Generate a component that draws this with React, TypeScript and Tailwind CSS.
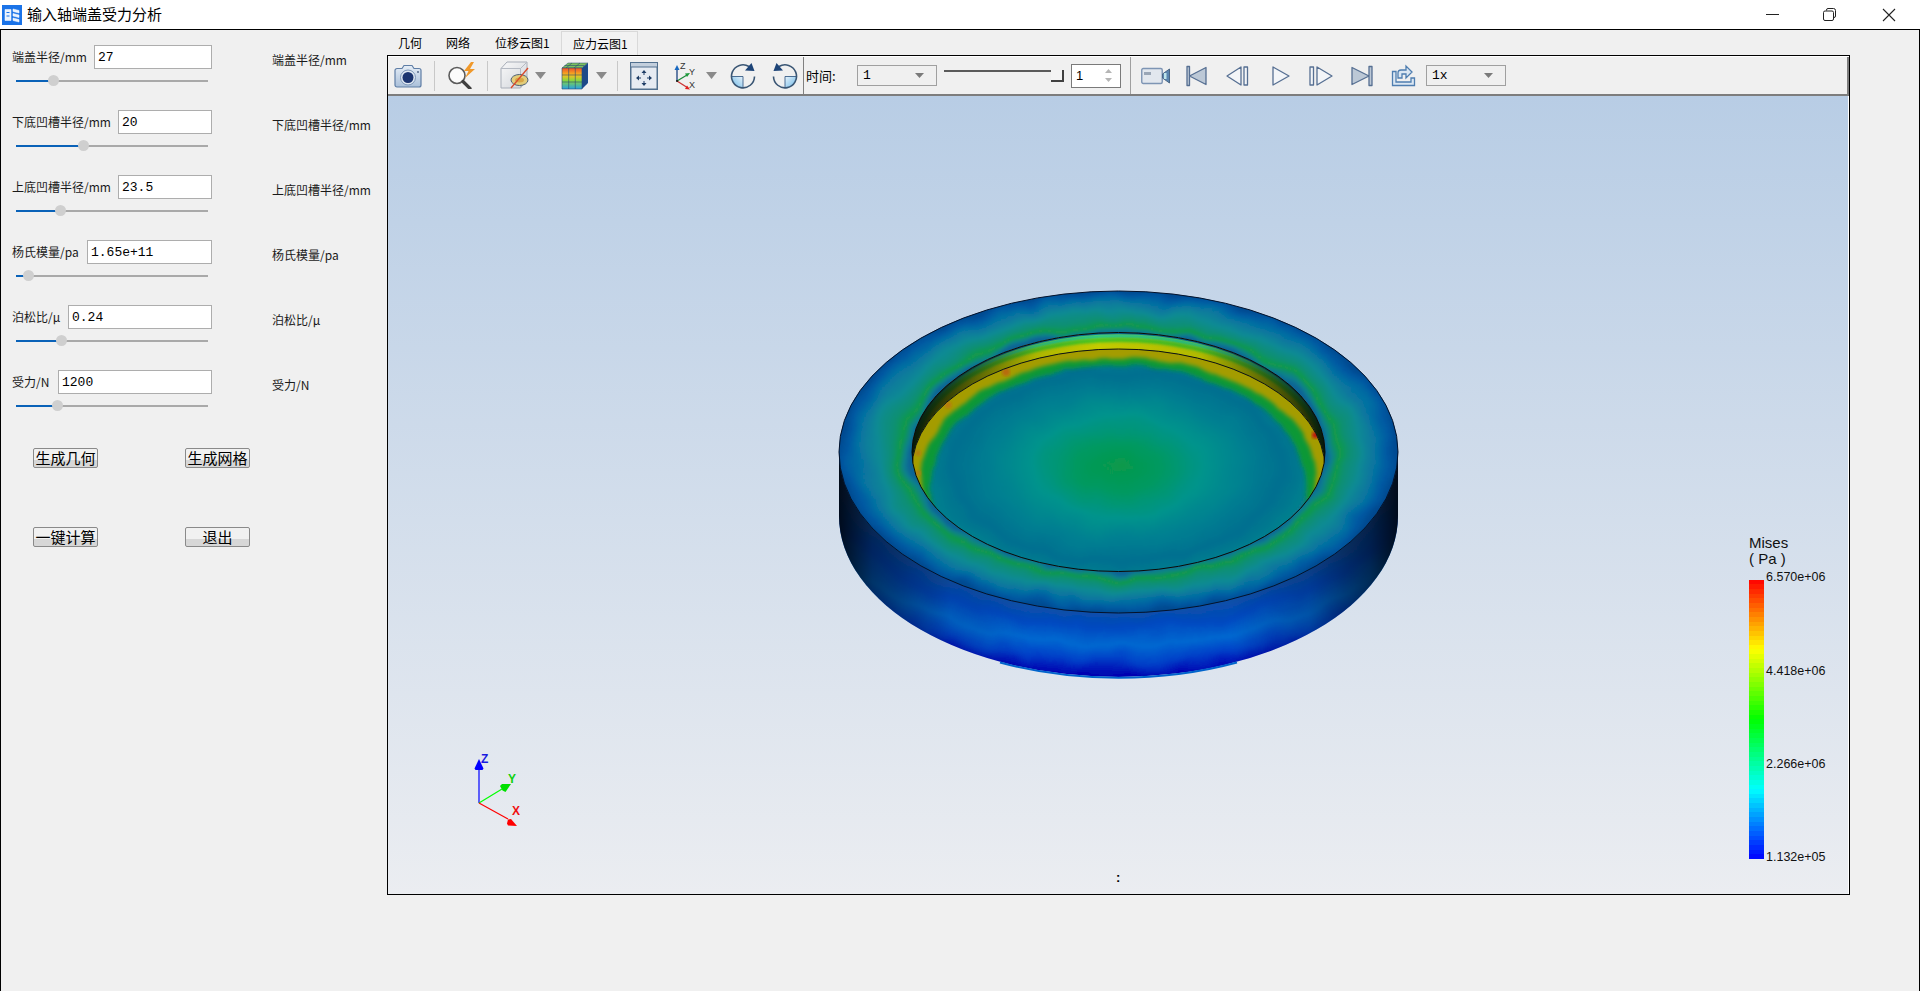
import React from "react";

const CJK = "font-['Noto_Sans_CJK_SC','Noto_Sans',sans-serif]";

const rows = [
  { label: "端盖半径/mm", labelW: "w-[82px]", value: "27", pct: 37 },
  { label: "下底凹槽半径/mm", labelW: "w-[106px]", value: "20", pct: 67 },
  { label: "上底凹槽半径/mm", labelW: "w-[106px]", value: "23.5", pct: 44 },
  { label: "杨氏模量/pa", labelW: "w-[75px]", value: "1.65e+11", pct: 12 },
  { label: "泊松比/μ", labelW: "w-[56px]", value: "0.24", pct: 45 },
  { label: "受力/N", labelW: "w-[46px]", value: "1200", pct: 41 },
];

function bandColor(i: number, n: number) {
  const t = (i + 0.5) / n;
  const seg = t * 4;
  let r = 0, g = 0, b = 0;
  if (seg < 1) { g = seg; b = 1; }
  else if (seg < 2) { g = 1; b = 2 - seg; }
  else if (seg < 3) { r = seg - 2; g = 1; }
  else { r = 1; g = 4 - seg; }
  return `rgb(${Math.round(r * 255)},${Math.round(g * 255)},${Math.round(b * 255)})`;
}

function Slider({ pct }: { pct: number }) {
  return (
    <div className="relative ml-1 mt-[11px] h-[2px] w-[192px] bg-[#a9a9a9]">
      <div className="h-full bg-[#0a62b8]" style={{ width: `${pct / 100 * 192 * 0.52}px` }} />
      <div
        className="absolute top-[-5px] h-[11px] w-[11px] rounded-full bg-[#cfcfcf]"
        style={{ left: `${pct / 100 * 192 * 0.52 - 5}px` }}
      />
    </div>
  );
}

function Row({ label, labelW, value, pct }: (typeof rows)[number]) {
  return (
    <div className="flex h-[65px] items-start">
      <div className="flex w-[200px] flex-col">
        <div className="flex h-6 items-center">
          <span className={`${labelW} ${CJK} text-[12px] text-[#1a1a1a] shrink-0 whitespace-nowrap`}>{label}</span>
          <div className="flex h-6 flex-1 items-center border border-[#adadad] bg-white pl-[3px] pt-px font-['Liberation_Mono',monospace] text-[13px] text-black">
            {value}
          </div>
        </div>
        <Slider pct={pct} />
      </div>
      <span className={`ml-[60px] mt-[6px] ${CJK} text-[12px] text-[#1a1a1a] whitespace-nowrap`}>{label}</span>
    </div>
  );
}

function Btn({ children }: { children: React.ReactNode }) {
  return (
    <div className={`flex h-5 w-[65px] items-center justify-center rounded-[2px] border border-[#8a8a8a] bg-[linear-gradient(#f1f1f1_62%,#d7d7d7_62%)] pb-px ${CJK} text-[15px] leading-none text-black`}>
      {children}
    </div>
  );
}

function Combo({ value, className }: { value: string; className: string }) {
  return (
    <div className={`flex h-[21px] w-20 shrink-0 items-center justify-between border border-[#a0a0a0] bg-[#f0f0f0] pl-[5px] pr-3 font-['Liberation_Mono',monospace] text-[13px] text-black ${className}`}>
      <span>{value}</span>
      <svg width="9" height="5" viewBox="0 0 9 5"><path d="M0 0h9L4.500 5z" fill="#7a7a7a" /></svg>
    </div>
  );
}

const Arrow = ({ className }: { className: string }) => (
  <svg className={`shrink-0 ${className}`} width="11" height="7" viewBox="0 0 11 7"><path d="M0 0h11L5.500 7z" fill="#8a8a8a" /></svg>
);

const Sep = ({ className }: { className: string }) => (
  <div className={`h-[30px] w-px shrink-0 bg-[#c8c8c8] ${className}`} />
);

const Camera = () => (
  <svg className="ml-[6px] shrink-0" width="28" height="24" viewBox="0 0 28 24">
    <defs><linearGradient id="cam" x1="0" y1="0" x2="0" y2="1"><stop offset="0" stopColor="#e6eef7" /><stop offset="1" stopColor="#a9bfd9" /></linearGradient></defs>
    <path d="M1 6.500a2 2 0 0 1 2-2h5l2-3h8l2 3h5a2 2 0 0 1 2 2V21a2 2 0 0 1-2 2H3a2 2 0 0 1-2-2z" fill="url(#cam)" stroke="#5f7ea6" strokeWidth="1.200" />
    <circle cx="14" cy="13.500" r="7.500" fill="#dfe8f2" stroke="#7d96b7" />
    <circle cx="14" cy="13.500" r="5.500" fill="#1c3570" />
    <circle cx="24" cy="8" r="1" fill="#54688a" />
  </svg>
);

const Magnifier = () => (
  <svg className="ml-[11px] shrink-0" width="31" height="27" viewBox="0 0 31 27">
    <circle cx="11" cy="13.500" r="8" fill="#fbfbfb" stroke="#5b5b5b" strokeWidth="1.600" />
    <path d="M17 19.500l7 7" stroke="#3f3f3f" strokeWidth="3.200" strokeLinecap="round" />
    <path d="M25 0l-7 9h4.500l-3.500 7 10-9h-5l4-7z" fill="#f0992b" />
  </svg>
);

const CubeSlice = () => (
  <svg className="ml-3 shrink-0" width="30" height="29" viewBox="0 0 30 29">
    <defs><linearGradient id="cb" x1="0" y1="0" x2="1" y2="1"><stop offset="0" stopColor="#f9f9f9" /><stop offset="1" stopColor="#cfd3d9" /></linearGradient></defs>
    <path d="M1 7.500L7 1h20v17l-6.500 9H1z" fill="url(#cb)" stroke="#a8aeb8" />
    <path d="M1 7.500h19.500V27M20.500 7.500L27 1" fill="none" stroke="#b5bac3" />
    <ellipse cx="19.500" cy="19" rx="8.500" ry="5.500" fill="#e3cd7a" stroke="#4c6177" />
    <ellipse cx="19.500" cy="19" rx="4.500" ry="2.500" fill="#d8a646" />
    <path d="M28 7L11 27" stroke="#d8492b" strokeWidth="1.300" />
  </svg>
);

const ColorCube = () => (
  <svg className="ml-[15px] shrink-0" width="28" height="28" viewBox="0 0 28 28">
    <defs>
      <linearGradient id="cc" x1="0" y1="0" x2="0" y2="1">
        <stop offset="0" stopColor="#f0502a" /><stop offset=".35" stopColor="#f7c01e" /><stop offset=".6" stopColor="#86d640" /><stop offset="1" stopColor="#26a0e4" />
      </linearGradient>
    </defs>
    <path d="M1 6L7 1h20l-6 5z" fill="#7cc060" stroke="#2a4a70" strokeWidth=".5" />
    <rect x="1" y="6" width="20" height="21" fill="url(#cc)" />
    <path d="M21 6l6-5v20l-6 6z" fill="#1a4b92" />
    <path d="M1 6h20v21H1zM7.700 6v21M14.300 6v21M1 13h20M1 20h20M11 1L5 6M19 1l-6 5M3.500 3.500h20M23 4v19M25 2.500v20" fill="none" stroke="#2a4a70" strokeWidth=".6" />
  </svg>
);

const Fit = () => (
  <svg className="ml-3 shrink-0" width="28" height="28" viewBox="0 0 28 28">
    <rect x=".75" y=".75" width="26.500" height="26.500" fill="#e6ebf2" stroke="#52708f" strokeWidth="1.500" />
    <rect x="1" y="1" width="26" height="4" fill="#c3cfdd" />
    <path d="M1 5h26" stroke="#52708f" />
    <path d="M14 8l-2.500 3h5zM14 24l-2.500-3h5zM6 16l3-2.500v5zM22 16l-3-2.500v5z" fill="#1f3d66" />
    <path d="M14 11v2M14 19v2M9 16h2M17 16h2" stroke="#1f3d66" />
  </svg>
);

const AxesIcon = () => (
  <svg className="ml-4 shrink-0" width="24" height="30" viewBox="0 0 24 30">
    <path d="M3 20V7" stroke="#17407f" strokeWidth="1.300" />
    <path d="M3 4l-2.500 5h5z" fill="#1868c0" />
    <path d="M3 20l10-6" stroke="#1c8a3a" strokeWidth="1.300" />
    <path d="M16 12l-5 .5 2 3.500z" fill="#1c9a3a" />
    <path d="M3 20l11 7" stroke="#c33" strokeWidth="1.300" />
    <path d="M16 28.500l-5-.5 2-3.500z" fill="#e02020" />
    <circle cx="3" cy="20" r="1" fill="#111" />
    <text x="6" y="8" fontSize="9" fill="#333" fontFamily="Liberation Sans">Z</text>
    <text x="15" y="14" fontSize="9" fill="#333" fontFamily="Liberation Sans">Y</text>
    <text x="15" y="27" fontSize="9" fill="#333" fontFamily="Liberation Sans">X</text>
  </svg>
);

const Rotate = ({ flip, className }: { flip?: boolean; className: string }) => (
  <svg className={`shrink-0 ${flip ? "-scale-x-100" : ""} ${className}`} width="26" height="26" viewBox="0 0 26 26">
    <defs><linearGradient id={flip ? "r2" : "r1"} x1="1" y1="0" x2="0" y2="1"><stop offset="0" stopColor="#e8f3fb" /><stop offset="1" stopColor="#68b6e6" /></linearGradient></defs>
    <path d="M1.500 13.500A11.500 11.500 0 0 0 13 25V13.500z" fill={`url(#${flip ? "r2" : "r1"})`} />
    <path d="M1.500 13.500H13V25" fill="none" stroke="#3a5f88" strokeWidth=".9" />
    <path d="M19 3.500A11.500 11.500 0 1 0 24.500 13.500" fill="none" stroke="#3a5674" strokeWidth="1.600" />
    <path d="M24.500 8L15 7.500 21.500 0z" fill="#1d4478" />
  </svg>
);

const VideoIcon = () => (
  <svg className="shrink-0" width="30" height="18" viewBox="0 0 30 18">
    <rect x=".75" y="1.500" width="20.500" height="15" rx="1.500" fill="#e2e7ee" stroke="#7e95b4" strokeWidth="1.400" />
    <rect x="3" y="5" width="7" height="3" fill="#9aa6b6" />
    <path d="M21.500 7l7-5v14l-7-5z" fill="#5b86b0" stroke="#4a6685" />
    <rect x="23" y="6" width="2.500" height="6" fill="#bfe6ec" />
  </svg>
);

const PlayerIcon = ({ d, fill, className, w }: { d: string; fill?: string; className: string; w: number }) => (
  <svg className={`shrink-0 ${className}`} width={w} height="22" viewBox={`0 0 ${w} 22`}>
    <path d={d} fill={fill ?? "#f3f5f8"} stroke="#566f92" strokeWidth="1.300" strokeLinejoin="round" />
  </svg>
);

const ExportIcon = () => (
  <svg className="ml-[18px] shrink-0" width="25" height="23" viewBox="0 0 25 23">
    <path d="M1.500 7.500v14h22V14h-3.500v4h-15V7.500z" fill="#dbe7f3" stroke="#4f7eb0" strokeWidth="1.300" />
    <path d="M7 14V9a3 3 0 0 1 3-3h5V2l6 6-6 6V10h-4v4z" fill="#dbe7f3" stroke="#4f7eb0" strokeWidth="1.300" />
  </svg>
);

const Toolbar = () => (
  <div className="flex h-10 shrink-0 items-center border-t border-white border-b-2 border-b-[#7d7d7d] bg-[#f0f0f0] pr-0">
    <Camera />
    <Sep className="ml-3" />
    <Magnifier />
    <Sep className="ml-[10px]" />
    <CubeSlice />
    <Arrow className="ml-[5px]" />
    <ColorCube />
    <Arrow className="ml-[7px]" />
    <Sep className="ml-[10px]" />
    <Fit />
    <AxesIcon />
    <Arrow className="ml-2" />
    <Rotate className="ml-[13px]" />
    <Rotate flip className="ml-4" />
    <div className="ml-[5px] h-full w-px shrink-0 bg-[#808080]" />
    <span className={`ml-[2px] w-[39px] shrink-0 ${CJK} text-[13px] text-black whitespace-nowrap`}>时间:</span>
    <Combo value="1" className="ml-3" />
    <div className="relative ml-[7px] h-3 w-[120px] shrink-0 self-center">
      <div className="h-[2px] w-full bg-[#5a5a5a]" />
      <div className="absolute right-0 top-0 h-3 w-[13px] border-b-2 border-r-2 border-[#404040] bg-[#f4f4f4]" />
    </div>
    <div className="ml-[7px] flex h-6 w-[50px] shrink-0 items-center justify-between border border-[#7a7a7a] bg-white pl-1 pr-2 font-['Liberation_Sans',sans-serif] text-[13px] text-black">
      <span>1</span>
      <svg width="7" height="13" viewBox="0 0 7 13"><path d="M3.500 0L7 4H0zM3.500 13L0 9h7z" fill="#b5b5b5" /></svg>
    </div>
    <div className="ml-[9px] h-full w-px shrink-0 bg-[#a0a0a0]" />
    <div className="ml-[10px] flex h-full flex-1 items-center border-r-2 border-[#7d7d7d]">
      <VideoIcon />
      <PlayerIcon className="ml-[15px]" w={21} d="M1 1.500h2.500v19H1zM20 2.500v17L3.500 11z" fill="#bcc8d6" />
      <PlayerIcon className="ml-[19px]" w={23} d="M15 2L1 11l14 9zM18 2h3.500v18H18z" />
      <PlayerIcon className="ml-[23px]" w={18} d="M1 2l16 9-16 9z" />
      <PlayerIcon className="ml-[19px]" w={24} d="M1 2h3.500v18H1zM8 2l15 9-15 9z" />
      <PlayerIcon className="ml-[18px]" w={22} d="M1 2.500v17L18 11zM18 1.500h3v19h-3z" fill="#bcc8d6" />
      <ExportIcon />
      <Combo value="1x" className="ml-[10px]" />
    </div>
  </div>
);

const Disk = () => (
  <svg className="absolute inset-0 h-full w-full" viewBox="388 96 1460 798">
    <defs>
      <radialGradient id="topG" gradientUnits="userSpaceOnUse" cx="0" cy="0" r="279.500" gradientTransform="translate(1118.500 452) scale(1 .576)">
        <stop offset=".739" stopColor="#0a6494" />
        <stop offset=".755" stopColor="#0b7f90" />
        <stop offset=".785" stopColor="#129a48" />
        <stop offset=".815" stopColor="#0f9070" />
        <stop offset=".87" stopColor="#0a8a94" />
        <stop offset=".93" stopColor="#0670a2" />
        <stop offset=".97" stopColor="#0358a2" />
        <stop offset="1" stopColor="#034a90" />
      </radialGradient>
      <radialGradient id="floorG" gradientUnits="userSpaceOnUse" cx="0" cy="0" r="206.500" gradientTransform="translate(1118 467) scale(1 .576)">
        <stop offset="0" stopColor="#07994a" />
        <stop offset=".2" stopColor="#059960" />
        <stop offset=".42" stopColor="#02938c" />
        <stop offset=".62" stopColor="#037f91" />
        <stop offset=".8" stopColor="#056f90" />
        <stop offset=".93" stopColor="#06808e" />
        <stop offset="1" stopColor="#0a6c90" />
      </radialGradient>
      <radialGradient id="sideG" gradientUnits="userSpaceOnUse" cx="0" cy="0" r="390" gradientTransform="translate(1118.500 452) scale(1 .576)">
        <stop offset=".717" stopColor="#0a50a8" />
        <stop offset=".78" stopColor="#0048c0" />
        <stop offset=".86" stopColor="#0468d0" />
        <stop offset=".93" stopColor="#0040c8" />
        <stop offset="1" stopColor="#0000b0" />
      </radialGradient>
      <linearGradient id="shade" gradientUnits="userSpaceOnUse" x1="839" y1="0" x2="1398" y2="0">
        <stop offset="0" stopColor="#000" stopOpacity=".85" />
        <stop offset=".06" stopColor="#000" stopOpacity=".5" />
        <stop offset=".2" stopColor="#000" stopOpacity=".1" />
        <stop offset=".34" stopColor="#000" stopOpacity="0" />
        <stop offset=".7" stopColor="#000" stopOpacity="0" />
        <stop offset=".84" stopColor="#000" stopOpacity=".2" />
        <stop offset=".95" stopColor="#000" stopOpacity=".58" />
        <stop offset="1" stopColor="#000" stopOpacity=".85" />
      </linearGradient>
      <linearGradient id="wallShade" gradientUnits="userSpaceOnUse" x1="912" y1="0" x2="1325" y2="0">
        <stop offset="0" stopColor="#061006" stopOpacity=".95" />
        <stop offset=".1" stopColor="#061006" stopOpacity=".7" />
        <stop offset=".3" stopColor="#061006" stopOpacity=".12" />
        <stop offset=".45" stopColor="#061006" stopOpacity="0" />
        <stop offset=".7" stopColor="#061006" stopOpacity=".1" />
        <stop offset=".92" stopColor="#061006" stopOpacity=".7" />
        <stop offset="1" stopColor="#061006" stopOpacity=".95" />
      </linearGradient>
      <clipPath id="ringClip">
        <path clipRule="evenodd" d="M839 452a279.500 161 0 1 0 559 0a279.500 161 0 1 0-559 0zM912 452a206.500 119.500 0 1 0 413 0a206.500 119.500 0 1 0-413 0z" />
      </clipPath>
      <clipPath id="holeClip"><ellipse cx="1118.500" cy="452" rx="206.500" ry="119.500" /></clipPath>
      <clipPath id="floorClip"><ellipse cx="1118.500" cy="468.500" rx="206.500" ry="119.500" /></clipPath>
      <clipPath id="sideClip">
        <path d="M839 452v64a279.500 161 0 0 0 559 0v-64z" />
      </clipPath>
      <filter id="wob" x="-10%" y="-10%" width="120%" height="120%">
        <feTurbulence type="fractalNoise" baseFrequency=".028" numOctaves="2" seed="4" />
        <feDisplacementMap in="SourceGraphic" scale="14" xChannelSelector="R" yChannelSelector="G" />
        <feGaussianBlur stdDeviation="1.400" />
      </filter>
      <filter id="b3" x="-10%" y="-10%" width="120%" height="120%">
        <feTurbulence type="fractalNoise" baseFrequency=".035" numOctaves="2" seed="9" />
        <feDisplacementMap in="SourceGraphic" scale="6" xChannelSelector="R" yChannelSelector="G" />
        <feGaussianBlur stdDeviation="2" />
      </filter>
      <filter id="b2"><feGaussianBlur stdDeviation="1.500" /></filter>
    </defs>

    <g clipPath="url(#sideClip)">
      <rect x="830" y="440" width="580" height="250" fill="url(#sideG)" filter="url(#wob)" />
      <rect x="830" y="440" width="580" height="250" fill="url(#shade)" />
    </g>
    <path d="M1000 662A279.500 161 0 0 0 1237 662" fill="none" stroke="#0064cc" strokeWidth="2" transform="translate(0 .5)" />

    <g clipPath="url(#ringClip)">
      <rect x="820" y="280" width="600" height="345" fill="url(#topG)" filter="url(#wob)" />
    </g>
    <ellipse cx="1118.500" cy="452" rx="279.500" ry="161" fill="none" stroke="#04122a" strokeWidth="1" />

    <g clipPath="url(#holeClip)">
      <rect x="905" y="325" width="430" height="255" fill="#c4cb00" />
      <ellipse cx="1118.500" cy="452" rx="206.500" ry="119" fill="none" stroke="#0f3f7a" strokeWidth="2.500" />
      <ellipse cx="1118.500" cy="455" rx="206.500" ry="119" fill="none" stroke="#00c8b4" strokeWidth="3.500" filter="url(#b2)" />
      <ellipse cx="1118.500" cy="459" rx="206.500" ry="119" fill="none" stroke="#32c428" strokeWidth="3.500" filter="url(#b2)" />
      <rect x="905" y="325" width="430" height="255" fill="url(#wallShade)" />
      <g clipPath="url(#floorClip)">
        <rect x="905" y="340" width="430" height="260" fill="url(#floorG)" filter="url(#wob)" />
        <path fillRule="evenodd" d="M895 330h450v330H895zM930.500 487a188 122 0 1 0 376 0a188 122 0 1 0-376 0z" fill="#0f9a30" filter="url(#b3)" opacity=".95" />
        <path fillRule="evenodd" d="M895 330h450v330H895zM921.500 477a197 119 0 1 0 394 0a197 119 0 1 0-394 0z" fill="#a49c04" filter="url(#b3)" />
        <circle cx="1315.500" cy="435" r="3.500" fill="#c01410" filter="url(#b2)" />
        <circle cx="1006" cy="372" r="4" fill="#b86a10" filter="url(#b2)" />
        <circle cx="948" cy="405" r="3.500" fill="#b87a10" filter="url(#b2)" />
        <circle cx="918" cy="453" r="3" fill="#b08010" filter="url(#b2)" />
        <circle cx="918" cy="473" r="3" fill="#b08010" filter="url(#b2)" />
      </g>
      <ellipse cx="1118.500" cy="468.500" rx="206.500" ry="119.500" fill="none" stroke="#111" strokeWidth="1" />
    </g>
    <ellipse cx="1118.500" cy="452" rx="206.500" ry="119.500" fill="none" stroke="#0a0a0a" strokeWidth="1" />

    <path d="M479 803V768" stroke="#0000ff" strokeWidth="1.200" />
    <path d="M479 759l-4.500 9.500 1 1.500h7l1-1.500z" fill="#0000ff" />
    <path d="M479 803l23-14" stroke="#00ff00" strokeWidth="1.200" />
    <path d="M511 784l-9 0-2 2 2.500 4.500 3 1.500z" fill="#00e000" />
    <path d="M479 803l29 16" stroke="#ff0000" strokeWidth="1.200" />
    <path d="M517 826l-6-7-3 .5-1 4 1 2z" fill="#ff0000" />
    <text x="481" y="763" fontFamily="Liberation Sans" fontSize="12" fontWeight="700" fill="#1a1ae0">Z</text>
    <text x="508" y="783" fontFamily="Liberation Sans" fontSize="12" fontWeight="700" fill="#10d010">Y</text>
    <text x="512" y="815" fontFamily="Liberation Sans" fontSize="12" fontWeight="700" fill="#f01010">X</text>
  </svg>
);

const legendText = "absolute left-[1378px] font-['Liberation_Sans',sans-serif] text-[12.500px] leading-none text-[#111] whitespace-nowrap";

const Viewport = () => (
  <div className="relative flex-1 bg-linear-to-b from-[#b8cde5] to-[#ebedf1] border-r border-white overflow-hidden">
    <Disk />
    <div className="absolute left-[1361px] top-[439px] font-['Liberation_Sans',sans-serif] text-[15px] leading-[16px] text-[#111]">
      <div>Mises</div>
      <div>( Pa )</div>
    </div>
    <div className="absolute left-[1361px] top-[484px] flex h-[279px] w-[15px] flex-col-reverse">
      {Array.from({ length: 60 }, (_, i) => (
        <div key={i} className="flex-1" style={{ backgroundColor: bandColor(i, 60) }} />
      ))}
    </div>
    <span className={`${legendText} top-[475px]`}>6.570e+06</span>
    <span className={`${legendText} top-[569px]`}>4.418e+06</span>
    <span className={`${legendText} top-[662px]`}>2.266e+06</span>
    <span className={`${legendText} top-[755px]`}>1.132e+05</span>
    <span className="absolute left-[728px] top-[775px] font-['Liberation_Sans',sans-serif] text-[13px] font-bold leading-none text-black">:</span>
  </div>
);

export default function App() {
  const tabs = [
    { t: "几何", c: "w-[47px] pl-[11px]" },
    { t: "网络", c: "w-[49px] pl-3" },
    { t: "位移云图1", c: "w-[78px] pl-3" },
  ];
  return (
    <div className="flex h-[991px] w-[1920px] flex-col overflow-hidden bg-[#f0f0f0]">
      <div className="flex h-[29px] shrink-0 items-center bg-white pl-[2px]">
        <svg width="20" height="20" viewBox="0 0 20 20">
          <rect width="20" height="20" fill="#1a73e8" />
          <path d="M3 4.500h6v11H3zM11 4l6 1.500v2.500l-6-1.500zM11 8.500l6 1.500v2.500l-6-1.500zM11 13l6 1.500V17l-6-1.500z" fill="#e9f2fd" stroke="#fff" strokeWidth=".5" />
          <path d="M4.500 7.500h3M4.500 11h3" stroke="#1a73e8" />
        </svg>
        <span className={`ml-[5px] ${CJK} text-[15px] text-black`}>输入轴端盖受力分析</span>
        <div className="ml-auto flex items-center">
          <svg width="13" height="3" viewBox="0 0 13 3" className="mr-[44px]"><path d="M0 1.500h13" stroke="#222" /></svg>
          <svg width="13" height="13" viewBox="0 0 13 13" className="mr-[46px]">
            <path d="M3.500 2.500V2a1.500 1.500 0 0 1 1.500-1.500h5.500A2 2 0 0 1 12.500 2.500V8A1.500 1.500 0 0 1 11 9.500h-.5" fill="none" stroke="#222" />
            <rect x=".5" y="3" width="10" height="9.500" rx="1.500" fill="#fff" stroke="#222" />
          </svg>
          <svg width="14" height="14" viewBox="0 0 14 14" className="mr-[24px]"><path d="M1 1l12 12M13 1L1 13" stroke="#222" strokeWidth="1.100" /></svg>
        </div>
      </div>

      <div className="flex flex-1 border-x border-t border-black bg-[#f0f0f0]">
        <div className="w-[386px] shrink-0 pl-[11px] pt-[15px]">
          {rows.map((r) => <Row key={r.label} {...r} />)}
          <div className="ml-[21px] mt-[13px] flex flex-col gap-[59px]">
            <div className="flex gap-[87px]"><Btn>生成几何</Btn><Btn>生成网格</Btn></div>
            <div className="flex gap-[87px]"><Btn>一键计算</Btn><Btn>退出</Btn></div>
          </div>
        </div>

        <div className="flex w-[1463px] shrink-0 flex-col">
          <div className={`flex h-[25px] items-end ${CJK} text-[12px] text-black`}>
            {tabs.map((x) => (
              <div key={x.t} className={`${x.c} flex h-6 items-center whitespace-nowrap`}>{x.t}</div>
            ))}
            <div className="flex h-6 w-[77px] items-center whitespace-nowrap border border-b-0 border-[#d9d9d9] bg-[#f2f2f2] pl-[11px]">应力云图1</div>
          </div>
          <div className="flex h-[840px] flex-col border border-black">
            <Toolbar />
            <Viewport />
          </div>
        </div>
      </div>
    </div>
  );
}
